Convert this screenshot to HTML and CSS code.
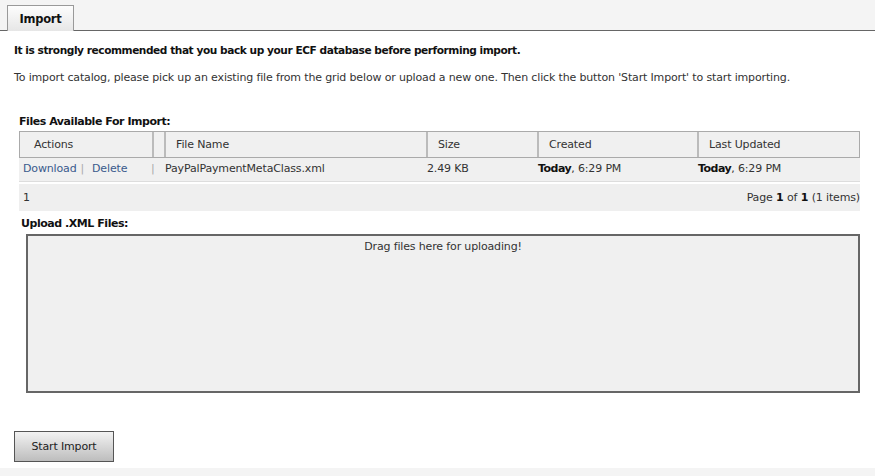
FILE: index.html
```html
<!DOCTYPE html>
<html>
<head>
<meta charset="utf-8">
<link rel="stylesheet" href="styles.css">
</head>
<body>
<div class="tabbar">
  <div class="tab">Import</div>
</div>
<div class="content">
  <p class="warn">It is strongly recommended that you back up your ECF database before performing import.</p>
  <p class="info">To import catalog, please pick up an existing file from the grid below or upload a new one. Then click the button 'Start Import' to start importing.</p>
  <div class="section-title">Files Available For Import:</div>
  <div class="grid">
    <div class="row head">
      <div class="c c-act">Actions</div>
      <div class="c c-sep"></div>
      <div class="c c-name">File Name</div>
      <div class="c c-size">Size</div>
      <div class="c c-created">Created</div>
      <div class="c c-updated">Last Updated</div>
    </div>
    <div class="row data">
      <div class="c c-act"><a class="lnk">Download</a><span class="bar">|</span><a class="lnk">Delete</a></div>
      <div class="c c-sep"><span class="bar">|</span></div>
      <div class="c c-name">PayPalPaymentMetaClass.xml</div>
      <div class="c c-size">2.49 KB</div>
      <div class="c c-created"><b>Today</b>, 6:29 PM</div>
      <div class="c c-updated"><b>Today</b>, 6:29 PM</div>
    </div>
    <div class="pager">
      <span>1</span>
      <span>Page <b>1</b> of <b>1</b> (1 items)</span>
    </div>
  </div>
  <div class="section-title upload-title">Upload .XML Files:</div>
  <div class="dropzone">Drag files here for uploading!</div>
  <button class="btn">Start Import</button>
</div>
<div class="footer"></div>
</body>
</html>
```
FILE: styles.css
```css
html, body { margin: 0; padding: 0; background: #fff; }
body {
  font-family: "DejaVu Sans", Verdana, sans-serif;
  font-size: 11px;
  letter-spacing: -0.15px;
  color: #222;
  width: 875px;
  height: 476px;
  overflow: hidden;
  position: relative;
}
b { letter-spacing: -0.5px; }
.tabbar {
  height: 30px;
  background: #f4f4f4;
  border-bottom: 1px solid #666;
  display: flex;
  align-items: flex-end;
  padding-left: 7px;
}
.tab {
  width: 67px;
  height: 26px;
  margin-bottom: -1px;
  border: 1px solid #999;
  border-bottom: none;
  background: linear-gradient(#fdfdfd, #e6e6e6);
  font-weight: bold;
  font-size: 11.5px;
  letter-spacing: -0.3px;
  color: #111;
  display: flex;
  align-items: center;
  justify-content: center;
  box-sizing: border-box;
}
.content { padding: 0 0 0 14px; }
.warn {
  margin: 12px 0 0 0;
  font-weight: bold;
  font-size: 10.6px;
  letter-spacing: -0.45px;
  color: #111;
  line-height: 14px;
}
.info {
  margin: 14px 0 0 0;
  color: #333;
  line-height: 14px;
}
.section-title {
  font-weight: bold;
  letter-spacing: -0.45px;
  color: #111;
  margin: 30px 0 0 5px;
  line-height: 14px;
}
.grid {
  margin: 2px 0 0 5px;
  width: 841px;
}
.row { display: flex; }
.head {
  height: 27px;
  background: #f0f0f0;
  border: 1px solid #aaa;
  box-sizing: border-box;
}
.head .c {
  border-right: 2px solid #bbb;
  box-sizing: border-box;
  line-height: 25px;
  padding-left: 10px;
  color: #333;
}
.head .c:last-child { border-right: none; }
.head .c-act { padding-left: 14px; }
.c-act { width: 134px; }
.c-sep { width: 12px; }
.head .c-sep { padding-left: 0; }
.c-name { width: 262px; }
.c-size { width: 111px; }
.c-created { width: 160px; }
.c-updated { flex: 1; }
.data {
  height: 23px;
  background: #f0f0f0;
  border-bottom: 1px solid #ddd;
  margin-bottom: 2px;
}
.data .c {
  line-height: 22px;
  color: #333;
  white-space: nowrap;
}
.data .c-act { padding-left: 4px; box-sizing: border-box; }
.data b { color: #111; }
.lnk { color: #3a5a8c; text-decoration: none; }
.bar { color: #aaa; margin: 0 8px 0 4px; }
.c-sep .bar { margin: 0 0 0 -2px; }
.pager {
  height: 27px;
  background: #efefef;
  display: flex;
  justify-content: space-between;
  align-items: center;
  padding: 0 0 0 4px;
  color: #333;
}
.pager b { color: #111; letter-spacing: 0; }
.upload-title { margin: 6px 0 0 7px; }
.dropzone {
  margin: 3px 0 0 12px;
  width: 834px;
  height: 159px;
  box-sizing: border-box;
  border: 2px solid #666;
  background: #f0f0f0;
  text-align: center;
  padding-top: 4px;
  color: #333;
}
.btn {
  display: block;
  margin: 38px 0 0 0;
  width: 100px;
  height: 31px;
  border: 1px solid #555;
  background: linear-gradient(#f2f2f2, #bdbdbd);
  font-family: "DejaVu Sans", Verdana, sans-serif;
  font-size: 11px;
  letter-spacing: -0.15px;
  color: #222;
  padding: 0;
  border-radius: 0;
}
.footer {
  position: absolute;
  left: 0;
  right: 0;
  top: 468px;
  bottom: 0;
  background: #f4f4f4;
}
```
